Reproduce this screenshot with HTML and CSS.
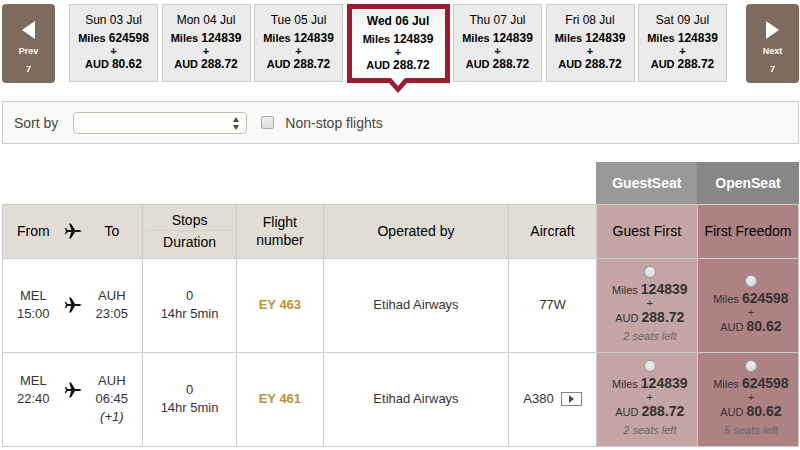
FILE: index.html
```html
<!DOCTYPE html>
<html lang="en">
<head>
  <meta charset="UTF-8">
  <title>Select flights</title>
  <link rel="stylesheet" href="styles.css">
</head>
<body>
  <svg class="defs" width="0" height="0" aria-hidden="true">
    <symbol id="plane" viewBox="0 0 18 18">
      <path d="M18 9l-2.500-.9H11L7 1.500H5.200L7.200 7.900 3.600 8.100 1.800 5.800H.8L2 9 .8 12.200h1l1.800-2.300 3.600.2L5.200 16.500H7L11 9.900h4.500z"/>
    </symbol>
  </svg>

  <nav class="days">
    <button class="step" type="button">
      <svg class="arrow" viewBox="0 0 13 18" aria-hidden="true"><path d="M13 0v18L0 9z"/></svg>
      <span>Prev</span>
      <span>7</span>
    </button>
    <div class="day-list">
      <button class="day" type="button">
        <span class="date">Sun 03 Jul</span>
        <span class="fare">Miles <b>624598</b></span>
        <span class="plus">+</span>
        <span class="fare">AUD <b>80.62</b></span>
      </button>
      <button class="day" type="button">
        <span class="date">Mon 04 Jul</span>
        <span class="fare">Miles <b>124839</b></span>
        <span class="plus">+</span>
        <span class="fare">AUD <b>288.72</b></span>
      </button>
      <button class="day" type="button">
        <span class="date">Tue 05 Jul</span>
        <span class="fare">Miles <b>124839</b></span>
        <span class="plus">+</span>
        <span class="fare">AUD <b>288.72</b></span>
      </button>
      <button class="day selected" type="button">
        <span class="date">Wed 06 Jul</span>
        <span class="fare">Miles <b>124839</b></span>
        <span class="plus">+</span>
        <span class="fare">AUD <b>288.72</b></span>
        <svg class="pointer" viewBox="0 0 22 15" aria-hidden="true">
          <path fill="#fff" d="M2 0h18l-9 9z"/>
          <path fill="#9b1c31" d="M0 0h4l7 8 7-8h4v5h-2l-9 10L2 5H0z"/>
        </svg>
      </button>
      <button class="day" type="button">
        <span class="date">Thu 07 Jul</span>
        <span class="fare">Miles <b>124839</b></span>
        <span class="plus">+</span>
        <span class="fare">AUD <b>288.72</b></span>
      </button>
      <button class="day" type="button">
        <span class="date">Fri 08 Jul</span>
        <span class="fare">Miles <b>124839</b></span>
        <span class="plus">+</span>
        <span class="fare">AUD <b>288.72</b></span>
      </button>
      <button class="day" type="button">
        <span class="date">Sat 09 Jul</span>
        <span class="fare">Miles <b>124839</b></span>
        <span class="plus">+</span>
        <span class="fare">AUD <b>288.72</b></span>
      </button>
    </div>
    <button class="step" type="button">
      <svg class="arrow" viewBox="0 0 13 18" aria-hidden="true"><path d="M0 0v18l13-9z"/></svg>
      <span>Next</span>
      <span>7</span>
    </button>
  </nav>

  <form class="filters">
    <label for="sort">Sort by</label>
    <div class="select">
      <select id="sort"><option></option></select>
      <svg class="updown" viewBox="0 0 6 13" aria-hidden="true"><path d="M3 0l3 5H0zM3 13L0 8h6z"/></svg>
    </div>
    <input type="checkbox" id="nonstop">
    <label for="nonstop">Non-stop flights</label>
  </form>

  <table class="flights">
    <colgroup>
      <col class="c-route">
      <col class="c-stops">
      <col class="c-number">
      <col class="c-operator">
      <col class="c-aircraft">
      <col class="c-price">
      <col class="c-price">
    </colgroup>
    <thead>
      <tr class="groups">
        <td colspan="5"></td>
        <th class="guest">GuestSeat</th>
        <th class="open">OpenSeat</th>
      </tr>
      <tr class="titles">
        <th>
          <div class="route">
            <span>From</span>
            <svg class="plane"><use href="#plane"/></svg>
            <span>To</span>
          </div>
        </th>
        <th><span class="stops">Stops</span><span class="duration">Duration</span></th>
        <th>Flight<br>number</th>
        <th>Operated by</th>
        <th>Aircraft</th>
        <th class="guest">Guest First</th>
        <th class="open">First Freedom</th>
      </tr>
    </thead>
    <tbody>
      <tr>
        <td>
          <div class="route">
            <span>MEL<br>15:00</span>
            <svg class="plane"><use href="#plane"/></svg>
            <span>AUH<br>23:05</span>
          </div>
        </td>
        <td>0<br>14hr 5min</td>
        <td><a class="number" href="#">EY 463</a></td>
        <td>Etihad Airways</td>
        <td>77W</td>
        <td class="guest">
          <label class="price">
            <input type="radio" name="fare">
            <span class="amount">Miles <b>124839</b></span>
            <span class="and">+</span>
            <span class="amount">AUD <b>288.72</b></span>
            <em>2 seats left</em>
          </label>
        </td>
        <td class="open">
          <label class="price">
            <input type="radio" name="fare">
            <span class="amount">Miles <b>624598</b></span>
            <span class="and">+</span>
            <span class="amount">AUD <b>80.62</b></span>
          </label>
        </td>
      </tr>
      <tr>
        <td>
          <div class="route">
            <span>MEL<br>22:40</span>
            <svg class="plane"><use href="#plane"/></svg>
            <span>AUH<br>06:45<br><i>(+1)</i></span>
          </div>
        </td>
        <td>0<br>14hr 5min</td>
        <td><a class="number" href="#">EY 461</a></td>
        <td>Etihad Airways</td>
        <td>
          <div class="aircraft">
            A380
            <button class="play" type="button" aria-label="Play video"><svg viewBox="0 0 5 8"><path d="M0 0v8l5-4z"/></svg></button>
          </div>
        </td>
        <td class="guest">
          <label class="price">
            <input type="radio" name="fare">
            <span class="amount">Miles <b>124839</b></span>
            <span class="and">+</span>
            <span class="amount">AUD <b>288.72</b></span>
            <em>2 seats left</em>
          </label>
        </td>
        <td class="open">
          <label class="price">
            <input type="radio" name="fare">
            <span class="amount">Miles <b>624598</b></span>
            <span class="and">+</span>
            <span class="amount">AUD <b>80.62</b></span>
            <em>5 seats left</em>
          </label>
        </td>
      </tr>
    </tbody>
  </table>
</body>
</html>
```

FILE: styles.css
```css
* {
  box-sizing: border-box;
}
body {
  margin: 0;
  padding: 4px 1px 0 2px;
  background: #fff;
  color: #333;
  font-family: "Liberation Sans", Arial, sans-serif;
  font-size: 13px;
  line-height: 18px;
}
button {
  font-family: inherit;
  cursor: pointer;
}
.defs {
  display: block;
}

/* day strip */
.days {
  display: flex;
  align-items: flex-start;
}
.step {
  display: flex;
  flex-direction: column;
  align-items: center;
  width: 53px;
  height: 79px;
  padding: 17px 0 0;
  border: 0;
  border-radius: 4px;
  background: #7d6b5e;
  color: #fff;
  font-size: 9px;
  font-weight: bold;
  line-height: 18px;
}
.arrow {
  width: 13px;
  height: 18px;
  margin-bottom: 3px;
  fill: #fff;
}
.day-list {
  display: flex;
  flex: 1;
  justify-content: space-between;
  margin: 0 19px 0 14px;
}
.day {
  position: relative;
  display: flex;
  flex: 0 1 89px;
  flex-direction: column;
  align-items: center;
  height: 78px;
  padding: 6px 0 0;
  border: 1px solid #ccc;
  background: #ebebeb;
  color: #000;
  font-size: 12px;
  line-height: 18px;
  white-space: nowrap;
}
.fare {
  font-size: 11px;
  font-weight: bold;
}
.fare b {
  font-size: 12px;
}
.plus {
  font-size: 11px;
  font-weight: bold;
  line-height: 8px;
}
.day.selected {
  flex-basis: 103px;
  height: 79px;
  padding-top: 3px;
  border: 5px solid #9b1c31;
  background: linear-gradient(#f2f2f2, #fff 60%);
}
.selected .date {
  font-weight: bold;
}
.pointer {
  position: absolute;
  top: 69px;
  left: 50%;
  width: 22px;
  height: 15px;
  margin-left: -11px;
}

/* sort and filter bar */
.filters {
  display: flex;
  align-items: center;
  height: 43px;
  margin: 18px 0;
  padding: 0 11px;
  border: 1px solid #ccc;
  background: #f9f9f9;
  color: #4a473c;
  font-size: 14px;
}
.select {
  position: relative;
  width: 174px;
  margin: 0 14px 0 15px;
}
.select select {
  display: block;
  width: 100%;
  height: 22px;
  border: 1px solid #c2c0b0;
  border-radius: 4px;
  background: #fcfcfb;
  appearance: none;
}
.updown {
  position: absolute;
  top: 5px;
  right: 8px;
  width: 6px;
  height: 13px;
  fill: #4a4a40;
  pointer-events: none;
}
.filters input {
  width: 13px;
  height: 13px;
  margin: 0 11px 0 0;
  border: 1px solid #a9a9a9;
  border-radius: 2px;
  background: linear-gradient(#eee, #dcdcdc);
  appearance: none;
}

/* flights */
.flights {
  width: 100%;
  border-collapse: collapse;
  table-layout: fixed;
  text-align: center;
}
.c-route { width: 17.6%; }
.c-stops { width: 11.8%; }
.c-number { width: 10.9%; }
.c-operator { width: 23.3%; }
.c-aircraft { width: 11%; }
.flights th,
.flights td {
  padding: 0;
  border: 1px solid #ccc;
}
.flights th {
  color: #000;
  font-size: 14px;
  font-weight: normal;
}
.flights .groups th,
.flights .groups td {
  height: 42px;
  border-width: 0 0 1px;
}
.flights .groups th {
  color: #fff;
  font-weight: bold;
}
.groups .guest {
  background: #999;
}
.groups .open {
  background: #878787;
}
.titles th {
  height: 54px;
  background: #e1ddd5;
}
tbody td {
  height: 94px;
}
.flights .titles .guest,
tbody .guest {
  background: #c4a4a4;
}
.flights .titles .open,
tbody .open {
  background: #ae8282;
}
.route {
  display: grid;
  grid-template-columns: 1fr 18px 1fr;
  align-items: start;
}
.plane {
  width: 18px;
  height: 18px;
  fill: #111;
}
tbody .plane {
  margin-top: 9px;
}
.stops,
.duration {
  display: block;
  margin: 0 4px;
  padding-bottom: 1px;
}
.stops {
  border-bottom: 1px solid #d0cec8;
}
.duration {
  padding: 2px 0 0;
}
.number {
  color: #c09032;
  font-weight: bold;
  text-decoration: none;
}
.aircraft {
  display: flex;
  align-items: center;
  justify-content: center;
  gap: 7px;
}
.play {
  display: flex;
  align-items: center;
  justify-content: center;
  width: 21px;
  height: 14px;
  padding: 0;
  border: 1px solid #7d8583;
  background: #fff;
}
.play svg {
  width: 5px;
  height: 8px;
  fill: #444c4a;
}
.price {
  display: flex;
  flex-direction: column;
  align-items: center;
  padding-left: 6px;
  font-size: 11px;
}
.price input {
  width: 12px;
  height: 12px;
  margin: 0 0 2px;
  border: 1px solid #999;
  border-radius: 50%;
  background: linear-gradient(#eee, #dcdcdc);
  appearance: none;
}
.amount b {
  font-size: 14px;
}
.and {
  font-size: 11px;
  line-height: 9px;
}
.price em {
  color: #666;
}
```
